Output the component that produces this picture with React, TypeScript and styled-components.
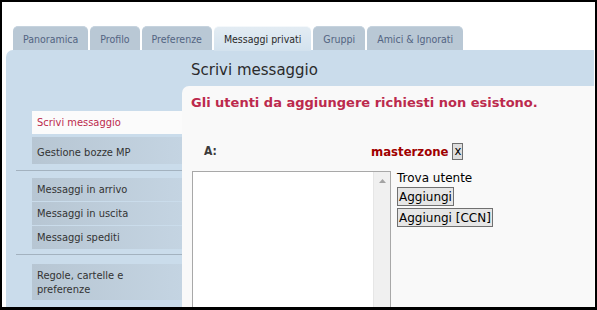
import React from "react";
import styled, { createGlobalStyle } from "styled-components";

const Global = createGlobalStyle`
  html, body { margin: 0; padding: 0; background: #fff; }
  body { font-family: "DejaVu Sans Condensed", "DejaVu Sans", sans-serif; }
  * { box-sizing: border-box; }
`;

const Frame = styled.div`
  width: 597px;
  height: 310px;
  border: 2px solid #000;
  border-bottom-width: 3px;
  background: #fff;
  overflow: hidden;
  display: flex;
  flex-direction: column;
`;

const TabRow = styled.div`
  flex: none;
  display: flex;
  gap: 2px;
  padding: 24px 0 0 11px;
  height: 48px;
  align-items: flex-end;
`;

const Tab = styled.div<{ $active?: boolean }>`
  height: ${(p) => (p.$active ? "25px" : "24px")};
  margin-bottom: ${(p) => (p.$active ? "-1px" : "0")};
  padding: 0 10px;
  display: flex;
  align-items: center;
  font-size: 10.5px;
  border-radius: 5px 5px 0 0;
  color: ${(p) => (p.$active ? "#2a2a2a" : "#536482")};
  background: ${(p) => (p.$active ? "linear-gradient(#e3ecf3, #d3e2ee)" : "#b9c8d5")};
  border-top: 1px solid ${(p) => (p.$active ? "#f4f8fb" : "#c6d3de")};
  position: relative;
`;

const Panel = styled.div`
  flex: 1;
  margin: 0 1px 0 4px;
  background: #cadceb;
  border-radius: 7px 0 0 0;
  display: flex;
  min-height: 0;
  overflow: hidden;
`;

const Sidebar = styled.nav`
  width: 176px;
  flex: none;
  padding: 61px 0 0 10px;
  display: flex;
  flex-direction: column;
`;

const MenuItem = styled.div<{ $active?: boolean; $tall?: boolean }>`
  flex: none;
  margin-left: 16px;
  padding: ${(p) => (p.$tall ? "4px 5px 0" : "0 5px")};
  min-height: ${(p) => (p.$tall ? "27px" : "23px")};
  display: flex;
  align-items: center;
  font-size: 11px;
  line-height: 14px;
  color: ${(p) => (p.$active ? "#bc2a4d" : "#333")};
  background: ${(p) =>
    p.$active ? "#fbfbfb" : "linear-gradient(to right, #b7c6d3, #c4d4e2)"};
  margin-bottom: 1px;
`;

const MultiItem = styled(MenuItem)`
  min-height: 36px;
  padding-top: 1px;
`;

const Separator = styled.hr<{ $above: number; $below: number }>`
  flex: none;
  border: 0;
  border-top: 1px solid #a3b2bf;
  margin: ${(p) => p.$above}px 0 ${(p) => p.$below}px 0;
  width: 166px;
`;

const Main = styled.main`
  flex: 1;
  display: flex;
  flex-direction: column;
  min-width: 0;
`;

const Header = styled.h2`
  flex: none;
  margin: 0;
  height: 36px;
  padding: 3px 0 0 9px;
  display: flex;
  align-items: center;
  font-family: "DejaVu Sans", sans-serif;
  font-weight: normal;
  font-size: 15px;
  color: #2b2b2b;
`;

const Content = styled.section`
  flex: 1;
  min-height: 0;
  background: #f9f9f9;
  border-radius: 7px 0 0 0;
  padding: 9px 0 0 9px;
  overflow: hidden;
`;

const ErrorText = styled.p`
  margin: 0;
  font-family: "DejaVu Sans", sans-serif;
  font-size: 13px;
  font-weight: bold;
  color: #bc2a4d;
`;

const RecipientRow = styled.div`
  display: flex;
  align-items: center;
  margin-top: 32px;
  height: 18px;
`;

const Label = styled.span`
  width: 180px;
  padding-left: 13px;
  font-weight: bold;
  font-size: 12px;
  color: #3c3c3c;
`;

const Username = styled.span`
  font-weight: bold;
  font-size: 13px;
  color: #a00000;
`;

const RemoveButton = styled.span`
  margin-left: 4px;
  width: 11px;
  height: 17px;
  border: 1px solid #707070;
  background: #dedede;
  font-size: 13px;
  line-height: 14px;
  display: flex;
  justify-content: center;
  color: #000;
`;

const AddArea = styled.div`
  display: flex;
  margin-top: 11px;
  margin-left: 1px;
  gap: 6px;
`;

const ListBox = styled.div`
  flex: none;
  width: 199px;
  height: 140px;
  border: 1px solid #a8a8a8;
  background: #fff;
  display: flex;
  justify-content: flex-end;
`;

const ScrollTrack = styled.div`
  width: 17px;
  background: #f0f0f0;
  border-left: 1px solid #e6e6e6;
  display: flex;
  justify-content: center;
  padding-top: 7px;
`;

const Finder = styled.div`
  display: flex;
  flex-direction: column;
  align-items: flex-start;
  gap: 1px;
  font-family: "DejaVu Sans", sans-serif;
  font-size: 12px;
  color: #000;
`;

const FindLabel = styled.span`
  line-height: 15px;
`;

const Button = styled.span`
  border: 1px solid #707070;
  background: #e6e6e6;
  padding: 0 1px;
  height: 19px;
  display: flex;
  align-items: center;
  font-size: 12px;
  color: #000;
  & + & { margin-top: 1px; }
`;

export default function App() {
  return (
    <>
      <Global />
      <Frame>
        <TabRow>
          <Tab>Panoramica</Tab>
          <Tab>Profilo</Tab>
          <Tab>Preferenze</Tab>
          <Tab $active>Messaggi privati</Tab>
          <Tab>Gruppi</Tab>
          <Tab>Amici &amp; Ignorati</Tab>
        </TabRow>
        <Panel>
          <Sidebar>
            <MenuItem $active>Scrivi messaggio</MenuItem>
            <MenuItem $tall style={{ marginTop: 2 }}>Gestione bozze MP</MenuItem>
            <Separator $above={5} $below={7} />
            <MenuItem>Messaggi in arrivo</MenuItem>
            <MenuItem>Messaggi in uscita</MenuItem>
            <MenuItem>Messaggi spediti</MenuItem>
            <Separator $above={4} $below={9} />
            <MultiItem>Regole, cartelle e preferenze</MultiItem>
          </Sidebar>
          <Main>
            <Header>Scrivi messaggio</Header>
            <Content>
              <ErrorText>Gli utenti da aggiungere richiesti non esistono.</ErrorText>
              <RecipientRow>
                <Label>A:</Label>
                <Username>masterzone</Username>
                <RemoveButton>x</RemoveButton>
              </RecipientRow>
              <AddArea>
                <ListBox>
                  <ScrollTrack>
                    <svg width="7" height="4" viewBox="0 0 7 4">
                      <path d="M0 4 L3.5 0 L7 4 Z" fill="#a3a3a3" />
                    </svg>
                  </ScrollTrack>
                </ListBox>
                <Finder>
                  <FindLabel>Trova utente</FindLabel>
                  <Button>Aggiungi</Button>
                  <Button>Aggiungi [CCN]</Button>
                </Finder>
              </AddArea>
            </Content>
          </Main>
        </Panel>
      </Frame>
    </>
  );
}
